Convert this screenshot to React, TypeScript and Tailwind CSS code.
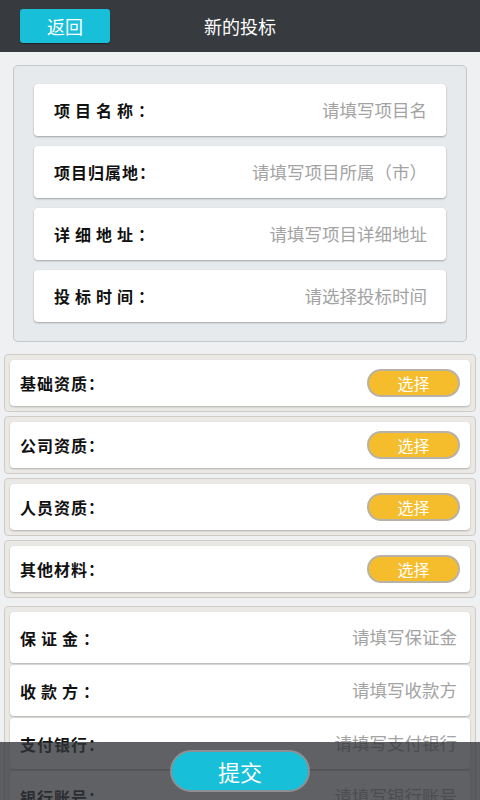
import React from 'react';

const font = { fontFamily: '"Noto Sans CJK SC", "Noto Sans", sans-serif' };

const projectFields = [
  { label: '项目名称：', hint: '请填写项目名', track: 'tracking-[5px]' },
  { label: '项目归属地：', hint: '请填写项目所属（市）', track: 'tracking-[1px]' },
  { label: '详细地址：', hint: '请填写项目详细地址', track: 'tracking-[5px]' },
  { label: '投标时间：', hint: '请选择投标时间', track: 'tracking-[5px]' },
];

const materials = ['基础资质：', '公司资质：', '人员资质：', '其他材料：'];

const payFields = [
  { label: '保证金：', hint: '请填写保证金', track: 'tracking-[5px]' },
  { label: '收款方：', hint: '请填写收款方', track: 'tracking-[5px]' },
  { label: '支付银行：', hint: '请填写支付银行', track: 'tracking-[1px]' },
  { label: '银行账号：', hint: '请填写银行账号', track: 'tracking-[1px]' },
];

export default function App() {
  return (
    <div className="relative w-[480px] h-[800px] overflow-hidden bg-[#eef0f2]" style={font}>
      {/* top bar */}
      <div className="relative flex items-center h-[52px] bg-[#373b3f] px-5">
        <button className="w-[90px] h-[34px] rounded-[3px] bg-[#17c0d8] text-white text-[18px] shadow-[0_1px_1px_rgba(0,0,0,0.4)]">
          返回
        </button>
        <div className="absolute left-0 right-0 text-center text-white text-[18px] pointer-events-none">新的投标</div>
      </div>

      {/* project info */}
      <div className="mx-[13px] mt-[13px] rounded-[5px] border border-[#c4c8cb] bg-[#e6eaed] px-5 pt-[18px] pb-[19px] flex flex-col gap-[10px]">
        {projectFields.map((f) => (
          <div
            key={f.label}
            className="flex items-center justify-between h-[52px] rounded-[4px] bg-white pl-[20px] pr-[19px] shadow-[0_1px_2px_rgba(0,0,0,0.3)]"
          >
            <span className={`text-[16px] font-bold text-[#111] ${f.track}`}>{f.label}</span>
            <span className="text-[17.5px] text-[#a3a3a3]">{f.hint}</span>
          </div>
        ))}
      </div>

      {/* materials */}
      <div className="mt-[12px] flex flex-col gap-[4px] px-[4px]">
        {materials.map((m) => (
          <div key={m} className="rounded-[4px] border border-[#cfccc6] bg-[#ebe9e5] p-[5px]">
            <div className="flex items-center justify-between h-[46px] rounded-[4px] bg-white pl-[10px] pr-[10px] shadow-[0_1px_2px_rgba(0,0,0,0.25)]">
              <span className="text-[16px] font-bold text-[#111] tracking-[1px]">{m}</span>
              <button className="w-[93px] h-[28px] rounded-full border-2 border-[#b9b3a6] bg-[#f5bd2b] text-white text-[16px] leading-none">
                选择
              </button>
            </div>
          </div>
        ))}
      </div>

      {/* payment */}
      <div className="mt-[8px] mx-[4px] rounded-[4px] border border-[#cfccc6] bg-[#ebe9e5] p-[5px] flex flex-col gap-[2px]">
        {payFields.map((f) => (
          <div
            key={f.label}
            className="flex items-center justify-between h-[51px] rounded-[4px] bg-white pl-[10px] pr-[13px] shadow-[0_1px_2px_rgba(0,0,0,0.25)]"
          >
            <span className={`text-[16px] font-bold text-[#111] ${f.track}`}>{f.label}</span>
            <span className="text-[17.5px] text-[#a3a3a3]">{f.hint}</span>
          </div>
        ))}
      </div>

      {/* bottom submit bar */}
      <div className="absolute left-0 right-0 bottom-0 h-[58px] bg-[rgba(50,53,57,0.78)] flex items-center justify-center">
        <button className="w-[140px] h-[42px] rounded-full border-2 border-[#8c9094] bg-[#17c0d8] text-white text-[22px] leading-none">
          提交
        </button>
      </div>
    </div>
  );
}
